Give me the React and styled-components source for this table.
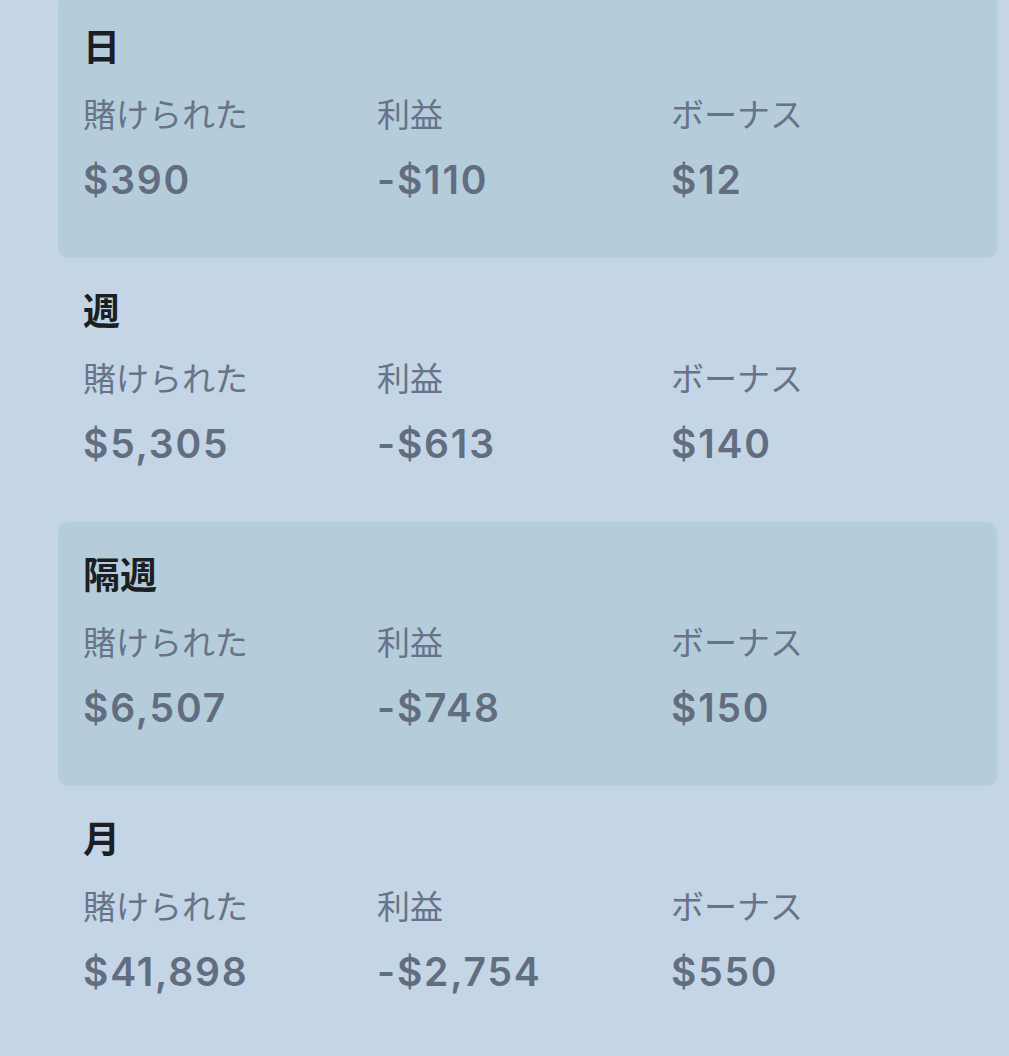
import React from "react";
import styled, { createGlobalStyle } from "styled-components";

const GlobalStyle = createGlobalStyle`
    html, body {
        margin: 0;
        padding: 0;
        background: #c4d5e5;
    }
    body {
        font-family: Inter, "Noto Sans CJK JP", sans-serif;
    }
`

const periods = [
    { title: "日", bet: "$390", profit: "-$110", bonus: "$12" },
    { title: "週", bet: "$5,305", profit: "-$613", bonus: "$140" },
    { title: "隔週", bet: "$6,507", profit: "-$748", bonus: "$150" },
    { title: "月", bet: "$41,898", profit: "-$2,754", bonus: "$550" },
];

const App = () => {
    return (
        <>
            <GlobalStyle />
            <StList>
                {periods.map((p, i) => (
                    <StCard key={p.title} $shaded={i % 2 === 0}>
                        <StTitle>{p.title}</StTitle>
                        <StGrid>
                            <StLabel>賭けられた</StLabel>
                            <StLabel>利益</StLabel>
                            <StLabel>ボーナス</StLabel>
                            <StValue>{p.bet}</StValue>
                            <StValue>{p.profit}</StValue>
                            <StValue>{p.bonus}</StValue>
                        </StGrid>
                    </StCard>
                ))}
            </StList>
        </>
    )
}

export default App;

const StList = styled.div`
    display: flex;
    flex-direction: column;
    margin: -6px 12px 0 58px;
    min-height: 1062px;
`

const StCard = styled.div`
    background: ${(props) => (props.$shaded ? "#b5cddb" : "transparent")};
    border-radius: 10px;
    height: 264px;
    box-sizing: border-box;
    padding: 30px 25px 0;
`

const StTitle = styled.div`
    font-family: Inter, "Noto Sans CJK JP", sans-serif;
    font-size: 37px;
    font-weight: 700;
    line-height: 48px;
    color: #1b1e22;
`

const StGrid = styled.div`
    display: grid;
    grid-template-columns: repeat(3, 294px);
    grid-template-rows: 48px 60px;
    row-gap: 11px;
    margin-top: 19px;
`

const StLabel = styled.div`
    font-family: Inter, "Noto Sans CJK JP", sans-serif;
    font-size: 33px;
    font-weight: 400;
    line-height: 48px;
    color: #67738a;
`

const StValue = styled.div`
    font-family: Inter, "Noto Sans CJK JP", sans-serif;
    font-size: 39px;
    font-weight: 600;
    letter-spacing: 1.8px;
    line-height: 60px;
    color: #626d82;
`
